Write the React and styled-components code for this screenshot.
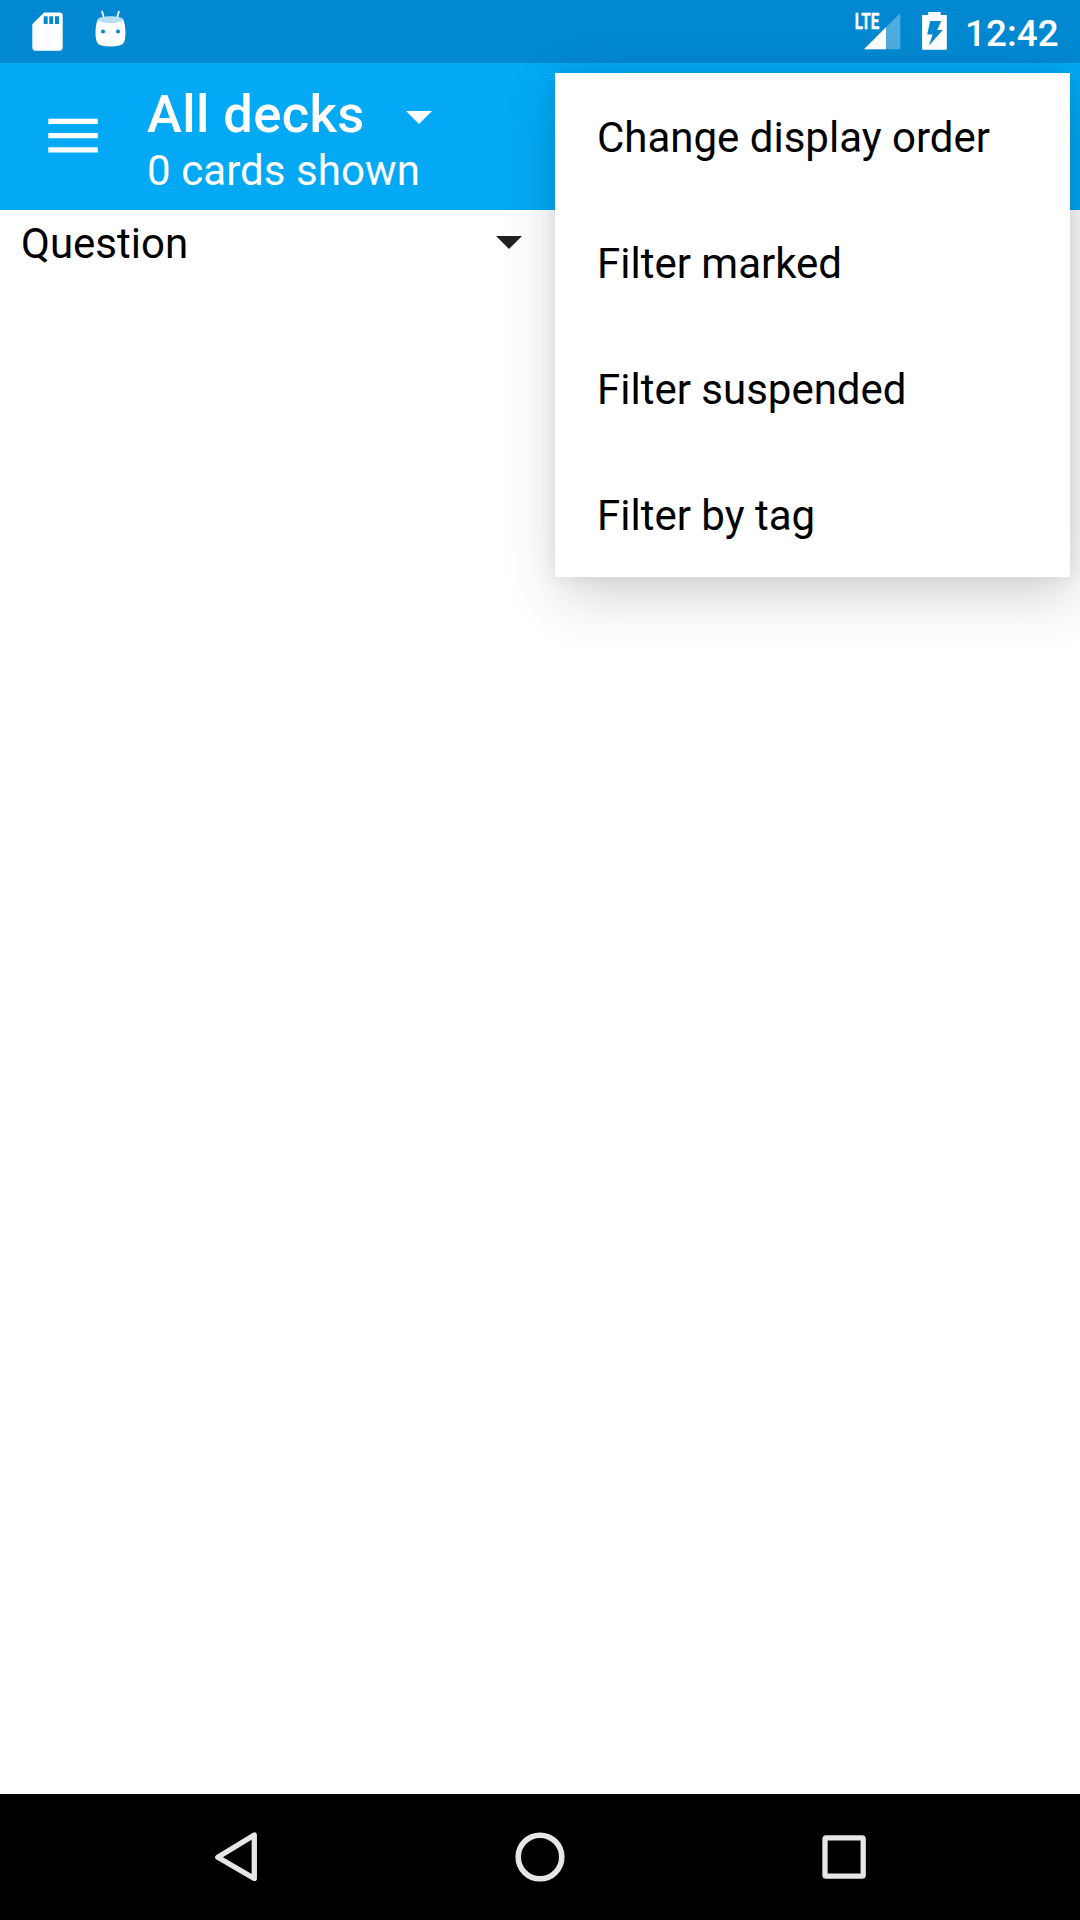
import React from "react";
import styled, { createGlobalStyle } from "styled-components";

const GlobalStyle = createGlobalStyle`
  * { box-sizing: border-box; }
  body {
    margin: 0;
    background: #fff;
    font-family: Roboto, "Noto Sans", sans-serif;
  }
`;

const Screen = styled.div`
  position: relative;
  display: flex;
  flex-direction: column;
  width: 1080px;
  height: 1920px;
  overflow: hidden;
  background: #fff;
`;

const StatusBar = styled.header`
  display: flex;
  align-items: flex-start;
  justify-content: space-between;
  height: 63px;
  padding: 0 20px 0 32px;
  background: #0288d1;
  color: #fff;
`;

const StatusGroup = styled.div`
  display: flex;
  height: 63px;
  gap: ${(p) => p.$gap}px;
`;

const Icon = styled.svg`
  display: block;
  flex: none;
  overflow: visible;
  width: ${(p) => p.$w}px;
  height: ${(p) => p.$h}px;
`;

const Clock = styled.time`
  margin-left: -1px;
  font-size: 36.75px;
  font-weight: 500;
  line-height: 43px;
  letter-spacing: 0.1px;
  padding-top: 12px;
  width: 95px;
  white-space: nowrap;
`;

const Toolbar = styled.div`
  display: flex;
  align-items: flex-start;
  height: 147px;
  padding-left: 48px;
  background: #03a9f4;
  color: #fff;
`;

const MenuButton = styled.button`
  width: 99px;
  height: 147px;
  padding: 0;
  border: 0;
  background: none;
`;

const DeckSpinner = styled.div`
  display: flex;
  flex-direction: column;
  padding-top: 20px;
`;

const TitleRow = styled.div`
  display: flex;
  align-items: flex-start;
  height: 63px;
  gap: 41px;
`;

const Title = styled.h1`
  margin: 0;
  font-size: 52.5px;
  font-weight: 500;
  line-height: 62px;
  letter-spacing: 0.4px;
`;

const Subtitle = styled.div`
  font-size: 42px;
  line-height: 50px;
  letter-spacing: 0.08px;
  white-space: nowrap;
`;

const Columns = styled.div`
  display: grid;
  grid-template-columns: 540px 540px;
  height: 68px;
`;

const ColumnSpinner = styled.div`
  display: flex;
  justify-content: space-between;
  align-items: flex-start;
  padding: 0 18.5px 0 21px;
  font-size: 42px;
  line-height: 68px;
  color: #000;
`;

const CaretSlot = styled.span`
  display: block;
  padding-top: ${(p) => p.$top}px;
`;

const CardList = styled.main`
  flex: 1;
`;

const Popup = styled.ul`
  position: absolute;
  top: 73px;
  right: 10px;
  width: 515px;
  margin: 0;
  padding: 0;
  list-style: none;
  background: #fff;
  box-shadow: 5px 18px 54px rgba(0, 0, 0, 0.18), 0 0 18px rgba(0, 0, 0, 0.07);
`;

const PopupItem = styled.li`
  height: 126px;
  padding-left: 42px;
  font-size: 42px;
  line-height: 130px;
  color: #000;
`;

const NavBar = styled.nav`
  display: flex;
  justify-content: center;
  gap: 178px;
  height: 126px;
  background: #000;
`;

const NavButton = styled.button`
  width: 126px;
  height: 126px;
  padding: 0;
  border: 0;
  background: none;
`;

const MENU = ["Change display order", "Filter marked", "Filter suspended", "Filter by tag"];

const Caret = ({ color, top }) => (
  <CaretSlot $top={top}>
    <Icon $w={26} $h={13} viewBox="0 0 26 13">
      <path d="M0 0H26L13 13Z" fill={color} />
    </Icon>
  </CaretSlot>
);

const SdCard = () => (
  <Icon $w={31} $h={63} viewBox="32 0 31 63">
    <path
      fillRule="evenodd"
      fill="#fff"
      d="M44 12.4H59.5Q62.7 12.4 62.7 15.6V47.6Q62.7 50.7 59.5 50.7H35.5Q32.3 50.7 32.3 47.6V24.2ZM43.7 16.3V24H47.7V16.3ZM49.3 16.3V24H53.2V16.3ZM55 16.3V24H59V16.3Z"
    />
  </Icon>
);

const DroidHead = () => (
  <Icon $w={31} $h={63} viewBox="95 0 31 63">
    <path d="M102.1 11.6L104.2 18.5M118.9 11.6L116.8 18.5" stroke="#fff" strokeWidth="1.8" strokeLinecap="round" />
    <path
      fill="#fff"
      d="M97.7 19.4C95.8 24 95 32 95.9 38C96.6 43 98 44.6 101.5 45.4C107 46.9 114 46.9 119.5 45.4C123 44.6 124.5 43 125.1 38C126 32 125.2 24 123.3 19.4C118 15.4 103 15.4 97.7 19.4Z"
    />
    <ellipse cx="110.5" cy="19.7" rx="12.6" ry="3.3" fill="#b7def2" />
    <circle cx="103" cy="31.6" r="2" fill="#0288d1" />
    <circle cx="118" cy="31.6" r="2" fill="#0288d1" />
  </Icon>
);

const Signal = () => (
  <Icon $w={47} $h={63} viewBox="855 0 47 63">
    <path d="M864 49.3L900.3 13V49.3Z" fill="#fff" fillOpacity="0.3" />
    <path d="M864 49.3L886 27.3V49.3Z" fill="#fff" />
    <text
      x="854.8"
      y="29"
      fontSize="21.5"
      fontWeight="700"
      fill="#fff"
      stroke="#fff"
      strokeWidth="0.35"
      textLength="24.5"
      lengthAdjust="spacingAndGlyphs"
    >
      LTE
    </text>
  </Icon>
);

const Battery = () => (
  <Icon $w={24} $h={63} viewBox="922 0 24 63">
    <path
      fillRule="evenodd"
      fill="#fff"
      d="M928.3 12.1H940.7V15H946.8V49.7H922.1V15H928.3ZM930.2 21H941.2L937.2 30H942.8L929 45.6L932.6 34.4H927.2Z"
    />
  </Icon>
);

export default function App() {
  return (
    <>
      <GlobalStyle />
      <Screen>
        <StatusBar>
          <StatusGroup $gap={32}>
            <SdCard />
            <DroidHead />
          </StatusGroup>
          <StatusGroup $gap={20}>
            <Signal />
            <Battery />
            <Clock>12:42</Clock>
          </StatusGroup>
        </StatusBar>

        <Toolbar>
          <MenuButton aria-label="Menu">
            <Icon $w={50} $h={147} viewBox="48 63 50 147">
              <path d="M48.3 121.3H97.8M48.3 135.6H97.8M48.3 149.9H97.8" stroke="#fff" strokeWidth="5.3" />
            </Icon>
          </MenuButton>
          <DeckSpinner>
            <TitleRow>
              <Title>All decks</Title>
              <Caret color="#fff" top={28} />
            </TitleRow>
            <Subtitle>0 cards shown</Subtitle>
          </DeckSpinner>
        </Toolbar>

        <Columns>
          <ColumnSpinner>
            <span>Question</span>
            <Caret color="#212121" top={26} />
          </ColumnSpinner>
        </Columns>

        <CardList />

        <NavBar>
          <NavButton aria-label="Back">
            <Icon $w={126} $h={126} viewBox="173 1794 126 126">
              <path d="M254.3 1835V1878.5L217.8 1857.3Z" fill="none" stroke="#e6e6e6" strokeWidth="5.3" strokeLinejoin="round" />
            </Icon>
          </NavButton>
          <NavButton aria-label="Home">
            <Icon $w={126} $h={126} viewBox="477 1794 126 126">
              <circle cx="540" cy="1857" r="21.8" fill="none" stroke="#e6e6e6" strokeWidth="5.6" />
            </Icon>
          </NavButton>
          <NavButton aria-label="Overview">
            <Icon $w={126} $h={126} viewBox="781 1794 126 126">
              <rect x="825" y="1837.8" width="38.2" height="38.4" rx="1.2" fill="none" stroke="#e6e6e6" strokeWidth="5.3" />
            </Icon>
          </NavButton>
        </NavBar>

        <Popup>
          {MENU.map((label) => (
            <PopupItem key={label}>{label}</PopupItem>
          ))}
        </Popup>
      </Screen>
    </>
  );
}
